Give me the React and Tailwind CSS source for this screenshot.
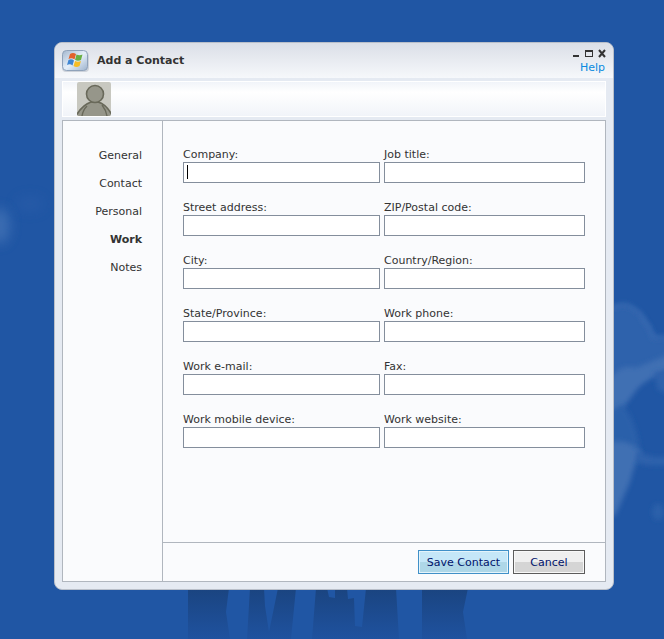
import { useState } from 'react';

const TABS = ['General', 'Contact', 'Personal', 'Work', 'Notes'];

const FIELDS = [
  { id: 'company', label: 'Company:' },
  { id: 'jobTitle', label: 'Job title:' },
  { id: 'street', label: 'Street address:' },
  { id: 'zip', label: 'ZIP/Postal code:' },
  { id: 'city', label: 'City:' },
  { id: 'country', label: 'Country/Region:' },
  { id: 'state', label: 'State/Province:' },
  { id: 'workPhone', label: 'Work phone:' },
  { id: 'workEmail', label: 'Work e-mail:' },
  { id: 'fax', label: 'Fax:' },
  { id: 'workMobile', label: 'Work mobile device:' },
  { id: 'workWebsite', label: 'Work website:' },
];

// Blue sky with clouds and the shadow strip at the bottom
function Wallpaper() {
  return (
    <svg
      className="absolute inset-0 h-full w-full"
      viewBox="0 0 664 639"
      preserveAspectRatio="xMidYMid slice"
      aria-hidden="true"
    >
      <defs>
        <filter id="soft" x="-30%" y="-30%" width="160%" height="160%">
          <feGaussianBlur stdDeviation="2.5" />
        </filter>
        <filter id="softer" x="-80%" y="-80%" width="260%" height="260%">
          <feGaussianBlur stdDeviation="6" />
        </filter>
        <linearGradient id="shade" x1="0" y1="588" x2="0" y2="639" gradientUnits="userSpaceOnUse">
          <stop offset="0" stopColor="#1a4480" />
          <stop offset="1" stopColor="#1f529f" />
        </linearGradient>
      </defs>
      <rect width="664" height="639" fill="#2056a4" />
      <ellipse cx="0" cy="226" rx="10" ry="18" fill="#4272b5" opacity="0.8" filter="url(#softer)" />
      <ellipse cx="30" cy="204" rx="14" ry="8" fill="#2d61ac" opacity="0.4" filter="url(#softer)" />
      <path d="M606 308Q626 302 638 312Q648 320 654 338L670 340V366L640 380L616 400L600 404Z" fill="#2f62ac" filter="url(#soft)" />
      <path d="M612 308Q624 301 634 309Q642 313 645 322Q650 326 653 337L670 338" fill="none" stroke="#3d6eb4" strokeWidth="3" filter="url(#soft)" />
      <path d="M606 388Q616 362 636 368Q650 362 670 354V370Q648 378 638 388Q626 404 620 412L606 418Z" fill="#3f6fb3" filter="url(#soft)" />
      <path d="M654 372L670 370V394L658 390Z" fill="#2f62ac" filter="url(#soft)" />
      <path d="M610 412L622 404Q636 420 640 450L610 450Z" fill="#2b60aa" filter="url(#soft)" />
      <path d="M606 444Q624 436 642 452Q634 464 630 482Q622 500 616 514L606 520Z" fill="#4170b3" filter="url(#soft)" />
      <path d="M636 450Q652 460 670 456V464Q652 468 636 462Z" fill="#2d62ac" filter="url(#soft)" />
      <ellipse cx="658" cy="512" rx="6" ry="8" fill="#2b60aa" filter="url(#soft)" />
      <g fill="url(#shade)">
        <path d="M188 588H229L226 612L230 639H188Z" />
        <path d="M250 588H264L265 606L269 632L278 588H296L291 639H247Z" />
        <path d="M316 588H327L329 597L335 598V588H347L348 599L354 598L355 626L362 627L366 588H396L399 639H312Z" />
        <path d="M422 588H468L463 612L467 639H422Z" />
      </g>
    </svg>
  );
}

function WindowsLogo() {
  return (
    <svg className="h-7 w-7" viewBox="0 0 28 28" aria-hidden="true">
      <defs>
        <linearGradient id="tile" x1="0" y1="0" x2="1" y2="1">
          <stop offset="0" stopColor="#a3b6ce" />
          <stop offset="0.5" stopColor="#e6f0fa" />
          <stop offset="1" stopColor="#9db2cc" />
        </linearGradient>
      </defs>
      <rect x="0" y="2" width="27" height="20" rx="4" fill="#cdd2da" />
      <rect x="0.5" y="0.5" width="25" height="20" rx="4" fill="url(#tile)" stroke="#8fa2ba" />
      <path d="M8 4Q11 2 14 4L12.500 9.500Q9.500 7.500 6.500 9Z" fill="#e2622c" />
      <path d="M14.500 4.500Q17.500 6 20.500 4.500L19 10Q16 11.500 13 10Z" fill="#69b044" />
      <path d="M6.500 10Q9.500 8.500 12 10.500L10.500 15.500Q8 13.500 5 15Z" fill="#3f86d3" />
      <path d="M13 11Q16 12.500 19 11L17.500 16Q14.500 18 11.500 16Z" fill="#f6bd26" />
    </svg>
  );
}

function Avatar() {
  return (
    <svg className="h-[34px] w-[34px] rounded-xs" viewBox="0 0 34 34" role="img" aria-label="Contact picture">
      <rect width="34" height="34" fill="#c8c8c0" />
      <path d="M-1 34Q5 23 14 20H21Q29 22 35 33V36H-1Z" fill="#96968a" stroke="#69695a" strokeWidth="1.6" />
      <circle cx="18" cy="12" r="8.500" fill="#96968a" stroke="#69695a" strokeWidth="1.6" />
      <path d="M10 24Q6 28 5 34M25 23Q29 28 30 34" fill="none" stroke="#69695a" strokeWidth="1.4" />
    </svg>
  );
}

function TitleBar() {
  return (
    <header className="flex h-[35px] items-start justify-between rounded-t-lg bg-linear-to-b from-[#dbdfe7] to-[#f6f8fb] pr-1.5 pl-[7px]">
      <div className="flex items-center gap-[7px] pt-[7px]">
        <WindowsLogo />
        <h1 className="pb-1.5 text-[11px] leading-4 font-bold">Add a Contact</h1>
      </div>
      <div className="flex flex-col items-end pt-1.5">
        <div className="flex gap-[3px]">
          <button type="button" aria-label="Minimize">
            <svg className="h-2.5 w-2.5" viewBox="0 0 10 10"><path d="M2 6h6v2H2z" fill="#333" /></svg>
          </button>
          <button type="button" aria-label="Maximize">
            <svg className="h-2.5 w-2.5" viewBox="0 0 10 10"><path d="M1 1h8v7H1zM2 3v4h6V3z" fill="#333" fillRule="evenodd" /></svg>
          </button>
          <button type="button" aria-label="Close">
            <svg className="h-2.5 w-2.5" viewBox="0 0 10 10"><path d="M2 1l6 7M8 1l-6 7" stroke="#333" strokeWidth="2" /></svg>
          </button>
        </div>
        <a href="#help" className="pr-0.5 text-[11px] leading-[18px] text-[#0a8ae0]">Help</a>
      </div>
    </header>
  );
}

function Field({ id, label, caret }) {
  return (
    <div className="relative">
      <label htmlFor={id} className="block h-4 text-[11px] leading-[18px]">{label}</label>
      <input
        id={id}
        name={id}
        type="text"
        className="block h-[21px] w-full border border-[#848e9c] bg-white px-1 text-[11px] outline-none"
      />
      {caret && <span className="absolute bottom-1 left-1 h-3.5 w-px bg-black" />}
    </div>
  );
}

export default function App() {
  const [activeTab, setActiveTab] = useState('Work');

  return (
    <div className="relative min-h-screen overflow-hidden bg-[#2056a4] pt-[42px] pr-[50px] pb-12 pl-[54px] font-['DejaVu_Sans',sans-serif] text-[#333]">
      <Wallpaper />

      {/* Dialog */}
      <main className="relative rounded-lg border border-[#b9bfc9] bg-[#e5eaf2]">
        <TitleBar />

        {/* Avatar strip */}
        <div className="mx-[7px] mt-[3px] border border-white bg-linear-to-b from-[#f1f4f9] via-white via-30% to-[#f1f4f9] pl-3.5">
          <Avatar />
        </div>

        <form
          className="mx-[7px] mt-[3px] mb-[7px] flex border border-[#b0b6be] bg-[#fafbfd]"
          onSubmit={(e) => e.preventDefault()}
        >
          {/* Tabs */}
          <nav className="flex w-[100px] shrink-0 flex-col items-end gap-2.5 border-r border-[#b0b6be] pt-[26px] pr-5">
            {TABS.map((tab) => (
              <button
                key={tab}
                type="button"
                onClick={() => setActiveTab(tab)}
                className={`text-[11px] leading-[18px] ${tab === activeTab ? 'font-bold' : ''}`}
              >
                {tab}
              </button>
            ))}
          </nav>

          <div className="min-w-0 flex-1">
            {/* Work fields */}
            <div className="grid grid-cols-[197fr_201fr] gap-x-1 gap-y-4 px-5 pt-[25px] pb-[94px]">
              {FIELDS.map((field) => (
                <Field key={field.id} id={field.id} label={field.label} caret={field.id === 'company'} />
              ))}
            </div>

            {/* Actions */}
            <div className="flex justify-end gap-1 border-t border-[#b0b6be] px-5 py-[7px]">
              <button
                type="submit"
                className="h-6 w-[91px] border border-[#4090c8] bg-linear-to-b from-[#c5e7f8] from-50% to-[#aed7e8] to-50% pt-0.5 text-[11px] leading-[18px] whitespace-nowrap text-[#00136b] inset-ring inset-ring-[#e4f4fb]"
              >
                Save Contact
              </button>
              <button
                type="button"
                className="h-6 w-[72px] border border-[#5c5c5c] bg-linear-to-b from-[#efefef] from-50% to-[#d5d5d5] to-50% pt-0.5 text-[11px] leading-[18px] text-[#00136b] inset-ring inset-ring-[#f8f8f8]"
              >
                Cancel
              </button>
            </div>
          </div>
        </form>
      </main>
    </div>
  );
}
